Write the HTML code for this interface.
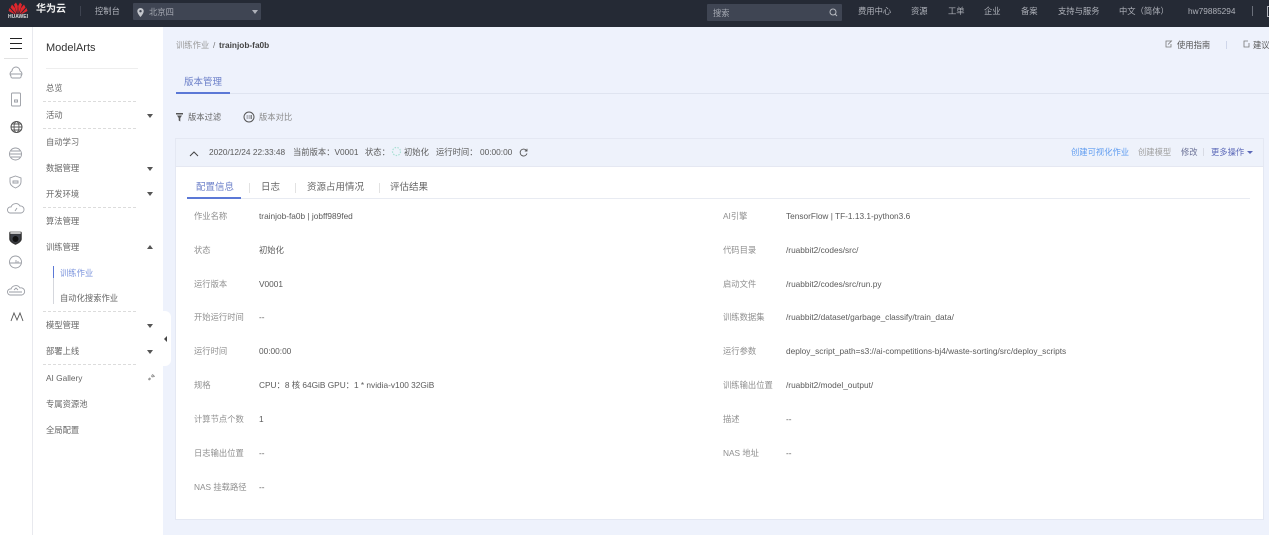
<!DOCTYPE html>
<html lang="zh"><head><meta charset="utf-8"><title>ModelArts</title>
<style>
html,body{margin:0;padding:0;width:1269px;height:535px;overflow:hidden;background:#eef2fc;font-family:"Liberation Sans","Noto Sans CJK SC",sans-serif;font-size:8.3px;color:#555}
body{filter:blur(.3px)}
.a,.t{position:absolute;white-space:nowrap}
.t{line-height:14px}
.n{color:#aeb1b9;font-size:8.3px}
.m{color:#666;font-size:8.3px}
.l{color:#8f8f8f;font-size:8.3px}
.v{color:#5a5a5a;font-size:8.3px}
.d{position:absolute;left:43px;width:93px;border-top:1px dashed #dcdcdc;height:0}
.c{position:absolute;left:147px;width:0;height:0;border-left:3px solid transparent;border-right:3px solid transparent;border-top:4px solid #555}
.cu{border-top:0;border-bottom:4px solid #555}
</style></head><body>
<div class="a" style="left:0;top:0;width:1269px;height:27px;background:#252a35"></div>
<svg class="a" style="left:7px;top:1px" width="22" height="20" viewBox="0 0 22 20"><g fill="#e0262c"><path d="M10.4 13 7 3.5 9 1.5 10.8 5z"/><path d="M11.6 13 15 3.5 13 1.5 11.2 5z"/><path d="M9.6 13.5 3.5 6.5 5 3.5 8 7z"/><path d="M12.4 13.5 18.5 6.5 17 3.5 14 7z"/><path d="M9 14 1.5 10 2.5 7z"/><path d="M13 14 20.5 10 19.5 7z"/></g></svg>
<div class="t" style="left:8px;top:10px;color:#ddd;font-size:5px;font-weight:bold">HUAWEI</div>
<div class="t" style="left:36px;top:3px;color:#f0f0f0;font-size:10px;font-weight:bold">华为云</div>
<div class="a" style="left:80px;top:6px;width:1px;height:10px;background:#3e4350"></div>
<div class="t" style="left:95px;top:4px;color:#aeb1b9">控制台</div>
<div class="a" style="left:133px;top:3px;width:128px;height:17px;background:#3f4553;border-radius:1px"></div>
<svg class="a" style="left:137px;top:8px" width="7" height="9" viewBox="0 0 7 9"><path d="M3.5 0A3.2 3.2 0 0 0 .3 3.2C.3 5.5 3.5 9 3.5 9S6.7 5.5 6.7 3.2A3.2 3.2 0 0 0 3.5 0z" fill="#c3c6cc"/><circle cx="3.5" cy="3.2" r="1.2" fill="#3f4553"/></svg>
<div class="t" style="left:149px;top:5px;color:#a5a9b2">北京四</div>
<div class="a" style="left:252px;top:10px;width:0;height:0;border-left:3px solid transparent;border-right:3px solid transparent;border-top:4px solid #aeb1b9"></div>
<div class="a" style="left:707px;top:4px;width:135px;height:17px;background:#3f4553;border-radius:1px"></div>
<div class="t" style="left:713px;top:6px;color:#a5a9b2">搜索</div>
<svg class="a" style="left:829px;top:8px" width="9" height="9" viewBox="0 0 9 9"><circle cx="4" cy="4" r="3" fill="none" stroke="#b5b8bf"/><path d="M6 6 8 8" stroke="#b5b8bf"/></svg>
<div class="t n" style="left:858px;top:4px">费用中心</div>
<div class="t n" style="left:911px;top:4px">资源</div>
<div class="t n" style="left:948px;top:4px">工单</div>
<div class="t n" style="left:984px;top:4px">企业</div>
<div class="t n" style="left:1021px;top:4px">备案</div>
<div class="t n" style="left:1058px;top:4px">支持与服务</div>
<div class="t n" style="left:1119px;top:4px">中文（简体）</div>
<div class="t n" style="left:1188px;top:4px">hw79885294</div>
<div class="a" style="left:1252px;top:6px;width:1px;height:10px;background:#6a6f7a"></div>
<div class="a" style="left:1267px;top:6px;width:4px;height:9px;border:1px solid #aeb1b9"></div>

<div class="a" style="left:0;top:27px;width:32px;height:508px;background:#fff;border-right:1px solid #e8e9ee"></div>
<div class="a" style="left:33px;top:27px;width:130px;height:508px;background:#fff"></div>
<div class="a" style="left:10px;top:38px;width:12px;height:1px;background:#222"></div>
<div class="a" style="left:10px;top:43px;width:12px;height:1px;background:#222"></div>
<div class="a" style="left:10px;top:48px;width:12px;height:1px;background:#222"></div>
<div class="a" style="left:4px;top:58px;width:24px;height:1px;background:#e2e2e2"></div>
<svg class="a" style="left:6px;top:64px" width="20" height="280" viewBox="0 0 20 280" fill="none" stroke="#9a9da4" stroke-width=".9">
<path d="M5 12a3 3 0 0 1 1-5 4 4 0 0 1 8 0 3 3 0 0 1 1 5 1.5 1.5 0 0 1-1 2H6a1.5 1.5 0 0 1-1-2zM4 10h12"/>
<rect x="5.5" y="29" width="9" height="13" rx="1"/><path d="M8.5 36h3v2h-3z"/>
<circle cx="10.5" cy="63" r="5.5" stroke="#555" stroke-width="1"/><ellipse cx="10.5" cy="63" rx="2.5" ry="5.5" stroke="#555"/><path d="M5 63h11M5.7 60h10M5.7 66h10" stroke="#555"/>
<circle cx="9.5" cy="90" r="6"/><path d="M3.5 90h12M5 87h9M5 93h9"/>
<path d="M9.5 112l5.5 2v4c0 3-3 5-5.500 6-2.500-1-5.500-3-5.500-6v-4z"/><path d="M7 117h5v2H7z"/>
<path d="M4 149a3 3 0 0 1 1-6 5 5 0 0 1 9-1 3.5 3.5 0 0 1 1 7z"/><path d="M9 147l2-3"/>
<path d="M4 169h11v6c0 2-3 4-5.5 5-2.500-1-5.500-3-5.500-5z" fill="#3d4048" stroke="#333" stroke-width="1.5"/><circle cx="9.5" cy="175" r="3" fill="#111" stroke="none"/><rect x="4" y="168" width="11" height="2" fill="#fff" stroke="#333" stroke-width=".6"/>
<circle cx="9.5" cy="198" r="6"/><path d="M4 199h11M10 196v3M12 197v2"/>
<path d="M4 231a3 3 0 0 1 1-6 5 5 0 0 1 9-1 3.5 3.5 0 0 1 2 7zM3 228h13M8 226l2-2 2 2"/>
<path d="M5 257 8 249 11 256 14 249 17 257M8 249l3 7" stroke="#555"/>
</svg>
<div class="t" style="left:46px;top:41px;color:#333;font-size:11px;line-height:14px">ModelArts</div>
<div class="a" style="left:46px;top:68px;width:92px;height:1px;background:#eee"></div>
<div class="t m" style="left:46px;top:81px">总览</div>
<div class="d" style="top:101px"></div>
<div class="t m" style="left:46px;top:108px">活动</div><div class="c" style="top:114px"></div>
<div class="d" style="top:128px"></div>
<div class="t m" style="left:46px;top:135px">自动学习</div>
<div class="t m" style="left:46px;top:161px">数据管理</div><div class="c" style="top:167px"></div>
<div class="t m" style="left:46px;top:187px">开发环境</div><div class="c" style="top:192px"></div>
<div class="d" style="top:207px"></div>
<div class="t m" style="left:46px;top:214px">算法管理</div>
<div class="t m" style="left:46px;top:240px">训练管理</div><div class="c cu" style="top:245px"></div>
<div class="a" style="left:53px;top:266px;width:1px;height:38px;background:#d5d7dd"></div>
<div class="a" style="left:53px;top:266px;width:1px;height:12px;background:#5b78d6"></div>
<div class="t" style="left:60px;top:266px;color:#7a93dc;font-size:8.3px">训练作业</div>
<div class="t m" style="left:60px;top:291px">自动化搜索作业</div>
<div class="d" style="top:311px"></div>
<div class="t m" style="left:46px;top:318px">模型管理</div><div class="c" style="top:324px"></div>
<div class="t m" style="left:46px;top:344px">部署上线</div><div class="c" style="top:350px"></div>
<div class="d" style="top:364px"></div>
<div class="t m" style="left:46px;top:371px">AI Gallery</div>
<svg class="a" style="left:148px;top:374px" width="7" height="7" viewBox="0 0 7 7" fill="none" stroke="#999" stroke-width=".8"><path d="M1 5.5 2.5 4M1.500 6a1 1 0 0 1-1-1l1-1 1 1zM4 3l2-2M4.500 3a1 1 0 0 1-1-1l1-1.500 2 2z"/></svg>
<div class="t m" style="left:46px;top:397px">专属资源池</div>
<div class="t m" style="left:46px;top:423px">全局配置</div>
<div class="a" style="left:160px;top:311px;width:11px;height:55px;background:#fff;border-radius:0 6px 6px 0"></div>
<div class="a" style="left:164px;top:336px;width:0;height:0;border-top:3px solid transparent;border-bottom:3px solid transparent;border-right:3px solid #444"></div>

<div class="t" style="left:176px;top:38px;color:#999;font-size:8.3px">训练作业</div>
<div class="t" style="left:213px;top:38px;color:#777">/</div>
<div class="t" style="left:219px;top:38px;color:#444;font-size:8.3px;font-weight:bold">trainjob-fa0b</div>
<svg class="a" style="left:1165px;top:40px" width="8" height="8" viewBox="0 0 8 8" fill="none" stroke="#777" stroke-width=".8"><path d="M6 1H1v6h5V4M3 4.5l4-4"/></svg>
<div class="t" style="left:1177px;top:38px;color:#555;font-size:8.3px">使用指南</div>
<div class="a" style="left:1226px;top:41px;width:1px;height:8px;background:#cfd6ea"></div>
<svg class="a" style="left:1243px;top:40px" width="7" height="8" viewBox="0 0 7 8" fill="none" stroke="#777" stroke-width=".8"><path d="M5 1H1v6h5V3"/></svg>
<div class="t" style="left:1253px;top:38px;color:#555;font-size:8.3px">建议</div>

<div class="t" style="left:184px;top:76px;color:#6a7ec8;font-size:9.5px">版本管理</div>
<div class="a" style="left:176px;top:93px;width:1093px;height:1px;background:#dfe4f0"></div>
<div class="a" style="left:176px;top:92px;width:54px;height:2px;background:#5b78d6"></div>
<svg class="a" style="left:176px;top:113px" width="8" height="9" viewBox="0 0 8 9" fill="#555"><path d="M0 0h7v1.5H0zM1 2.500h5L4.300 5v3.500L2.700 7.500V5z"/></svg>
<div class="t" style="left:188px;top:110px;color:#666">版本过滤</div>
<svg class="a" style="left:243px;top:111px" width="12" height="12" viewBox="0 0 12 12" fill="none" stroke="#555"><circle cx="6" cy="6" r="5"/><path d="M3.5 5h2M3.5 7h2M7 4v4M8.5 4v4" stroke-width=".7"/></svg>
<div class="t" style="left:259px;top:110px;color:#8a8a8a">版本对比</div>

<div class="a" style="left:176px;top:139px;width:1087px;height:380px;background:#fff;box-shadow:0 0 0 1px #e4e8f3"></div>
<div class="a" style="left:176px;top:139px;width:1087px;height:27px;background:#eef2fb;border-bottom:1px solid #e5e8f2"></div>
<svg class="a" style="left:189px;top:150px" width="10" height="7" viewBox="0 0 10 7" fill="none" stroke="#444"><path d="M1 6l4-4 4 4"/></svg>
<div class="t v" style="left:209px;top:145px">2020/12/24 22:33:48</div>
<div class="t v" style="left:293px;top:145px">当前版本：V0001</div>
<div class="t v" style="left:365px;top:145px">状态：</div>
<svg class="a" style="left:391px;top:146px" width="11" height="11" viewBox="0 0 11 11" fill="none" stroke="#a8e0d4" stroke-width="1.2" stroke-dasharray="1.5 1.3"><circle cx="5.5" cy="5.5" r="4"/></svg>
<div class="t v" style="left:404px;top:145px">初始化</div>
<div class="t v" style="left:436px;top:145px">运行时间：</div>
<div class="t v" style="left:480px;top:145px">00:00:00</div>
<svg class="a" style="left:519px;top:148px" width="9" height="9" viewBox="0 0 9 9" fill="none" stroke="#555"><path d="M7.5 2.5A3.5 3.5 0 1 0 8 5.5M8 .8v2.200H5.800" stroke-width=".9"/></svg>
<div class="t" style="left:1071px;top:145px;color:#5f9cf0">创建可视化作业</div>
<div class="t" style="left:1138px;top:145px;color:#a0a0a0">创建模型</div>
<div class="t" style="left:1181px;top:145px;color:#6b7196">修改</div>
<div class="a" style="left:1203px;top:148px;width:1px;height:8px;background:#d8dbe4"></div>
<div class="t" style="left:1211px;top:145px;color:#5b68b8">更多操作</div>
<div class="a" style="left:1247px;top:151px;width:0;height:0;border-left:3px solid transparent;border-right:3px solid transparent;border-top:3px solid #5b68b8"></div>

<div class="t" style="left:196px;top:181px;color:#6a7ec8;font-size:9.5px">配置信息</div>
<div class="t" style="left:261px;top:181px;color:#666;font-size:9.5px">日志</div>
<div class="t" style="left:307px;top:181px;color:#666;font-size:9.5px">资源占用情况</div>
<div class="t" style="left:390px;top:181px;color:#666;font-size:9.5px">评估结果</div>
<div class="a" style="left:249px;top:183px;width:1px;height:10px;background:#e2e2e2"></div>
<div class="a" style="left:295px;top:183px;width:1px;height:10px;background:#e2e2e2"></div>
<div class="a" style="left:379px;top:183px;width:1px;height:10px;background:#e2e2e2"></div>
<div class="a" style="left:187px;top:198px;width:1063px;height:1px;background:#e8ebf2"></div>
<div class="a" style="left:187px;top:197px;width:54px;height:2px;background:#5b78d6"></div>

<div class="t l" style="left:194px;top:209px">作业名称</div><div class="t v" style="left:259px;top:209px">trainjob-fa0b | jobff989fed</div>
<div class="t l" style="left:194px;top:243px">状态</div><div class="t v" style="left:259px;top:243px">初始化</div>
<div class="t l" style="left:194px;top:277px">运行版本</div><div class="t v" style="left:259px;top:277px">V0001</div>
<div class="t l" style="left:194px;top:310px">开始运行时间</div><div class="t v" style="left:259px;top:310px">--</div>
<div class="t l" style="left:194px;top:344px">运行时间</div><div class="t v" style="left:259px;top:344px">00:00:00</div>
<div class="t l" style="left:194px;top:378px">规格</div><div class="t v" style="left:259px;top:378px">CPU：8 核 64GiB GPU：1 * nvidia-v100 32GiB</div>
<div class="t l" style="left:194px;top:412px">计算节点个数</div><div class="t v" style="left:259px;top:412px">1</div>
<div class="t l" style="left:194px;top:446px">日志输出位置</div><div class="t v" style="left:259px;top:446px">--</div>
<div class="t l" style="left:194px;top:480px">NAS 挂载路径</div><div class="t v" style="left:259px;top:480px">--</div>

<div class="t l" style="left:723px;top:209px">AI引擎</div><div class="t v" style="left:786px;top:209px">TensorFlow | TF-1.13.1-python3.6</div>
<div class="t l" style="left:723px;top:243px">代码目录</div><div class="t v" style="left:786px;top:243px">/ruabbit2/codes/src/</div>
<div class="t l" style="left:723px;top:277px">启动文件</div><div class="t v" style="left:786px;top:277px">/ruabbit2/codes/src/run.py</div>
<div class="t l" style="left:723px;top:310px">训练数据集</div><div class="t v" style="left:786px;top:310px">/ruabbit2/dataset/garbage_classify/train_data/</div>
<div class="t l" style="left:723px;top:344px">运行参数</div><div class="t v" style="left:786px;top:344px">deploy_script_path=s3://ai-competitions-bj4/waste-sorting/src/deploy_scripts</div>
<div class="t l" style="left:723px;top:378px">训练输出位置</div><div class="t v" style="left:786px;top:378px">/ruabbit2/model_output/</div>
<div class="t l" style="left:723px;top:412px">描述</div><div class="t v" style="left:786px;top:412px">--</div>
<div class="t l" style="left:723px;top:446px">NAS 地址</div><div class="t v" style="left:786px;top:446px">--</div>
</body></html>
